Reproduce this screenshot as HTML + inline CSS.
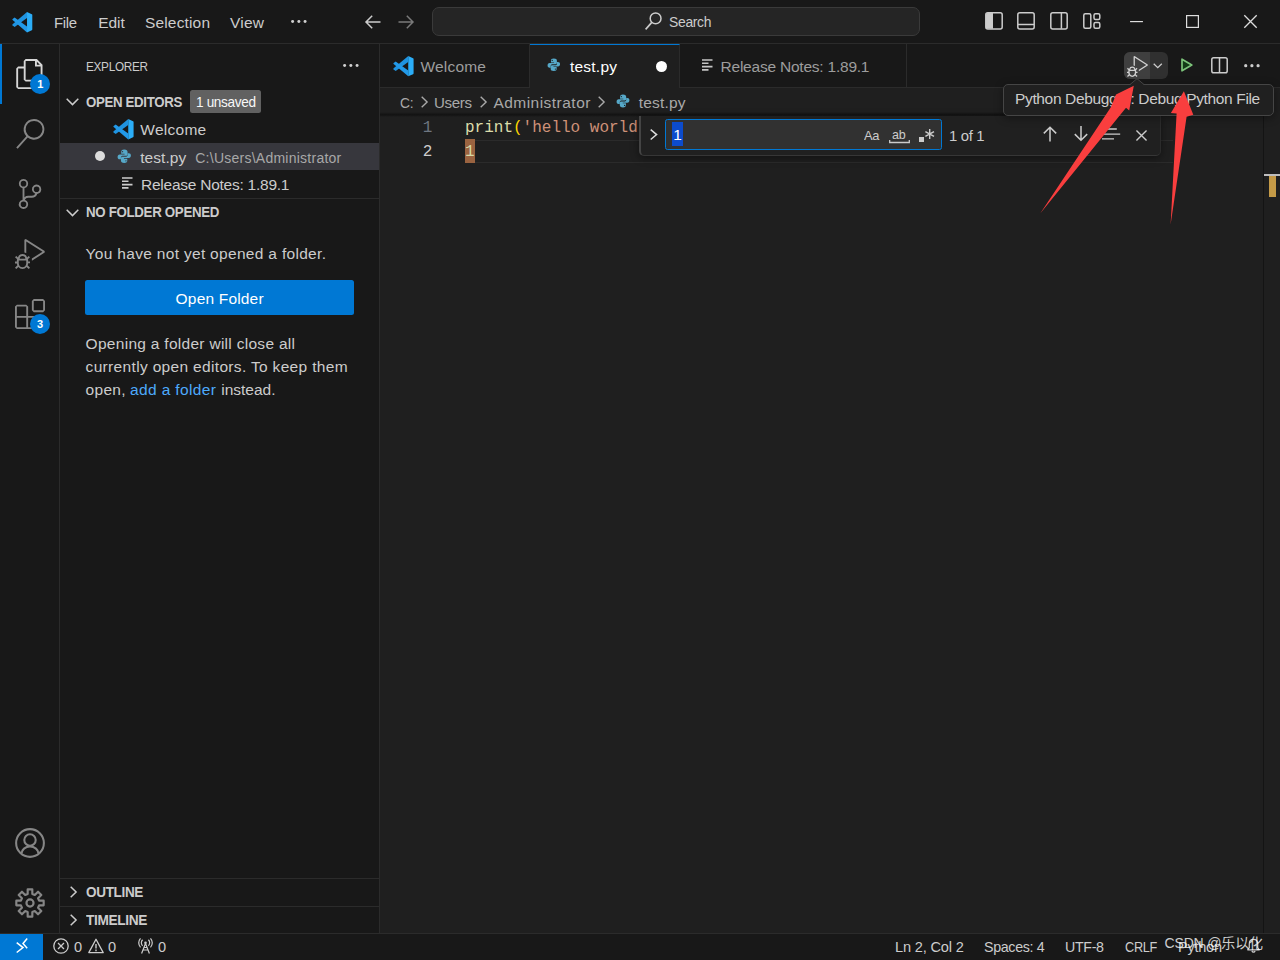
<!DOCTYPE html><html lang="en"><head><meta charset="utf-8"><title>test.py - Visual Studio Code</title><style>
*{box-sizing:border-box;margin:0;padding:0}
html,body{width:1280px;height:960px;overflow:hidden;background:#1f1f1f}
body{position:relative;font-family:"Liberation Sans","Noto Sans CJK SC",sans-serif;color:#ccc;-webkit-font-smoothing:antialiased}
div,span,svg{position:absolute}
.t{white-space:pre;line-height:1;transform-origin:0 50%}
.m{font-family:"Liberation Mono",monospace}
.i{overflow:visible}
#titlebar{left:0;top:0;width:1280px;height:44px;background:#181818;border-bottom:1px solid #2b2b2b}
#activity{left:0;top:44px;width:60px;height:889px;background:#181818;border-right:1px solid #2b2b2b}
#sidebar{left:60px;top:44px;width:320px;height:889px;background:#181818;border-right:1px solid #2b2b2b}
#editor{left:380px;top:44px;width:900px;height:889px;background:#1f1f1f}
#status{left:0;top:933px;width:1280px;height:27px;background:#181818;box-shadow:inset 0 1px 0 #2b2b2b}
#overlay{left:0;top:0;width:1280px;height:960px;pointer-events:none}
</style></head><body><div id="titlebar"><svg class="i" style="left:11.7px;top:11.8px" width="20.3" height="20.4" viewBox="0 0 100 100" preserveAspectRatio="none"><path d="M74 0L97.500 10.500Q100 11.700 100 15L100 85Q100 88.300 97.500 89.500L74 100Z" fill="#2badf7"/><path d="M74 0L74 29L13 73.500L3 66Q0 63.500 3 60.500Z" fill="#1f93e0"/><path d="M74 100L74 71L13 26.500L3 34Q0 36.500 3 39.500Z" fill="#2299e8"/></svg><span class="t" style="left:53.6px;top:15px;font-size:15.5px;color:#cccccc;letter-spacing:-0.350px;transform:scaleX(0.9610);">File</span><span class="t" style="left:98.2px;top:15px;font-size:15.5px;color:#cccccc;letter-spacing:-0.040px;">Edit</span><span class="t" style="left:145px;top:15px;font-size:15.5px;color:#cccccc;letter-spacing:0.154px;">Selection</span><span class="t" style="left:230px;top:15px;font-size:15.5px;color:#cccccc;letter-spacing:0.224px;">View</span><svg class="i" style="left:290.7px;top:19.5px" width="16" height="3.2" viewBox="0 0 16 3.200" fill="#d0d0d0"><circle cx="1.600" cy="1.600" r="1.500"/><circle cx="7.850" cy="1.600" r="1.500"/><circle cx="14.100" cy="1.600" r="1.500"/></svg><svg class="i" style="left:365px;top:14.5px" width="16" height="14" viewBox="0 0 16 14" ><path d="M15.500 7H1.200M7.200 0.800L1 7l6.200 6.200" stroke="#cccccc" stroke-width="1.500" fill="none"/></svg><svg class="i" style="left:398px;top:14.5px" width="16" height="14" viewBox="0 0 16 14" ><path d="M0.500 7H14.800M8.800 0.800L15 7l-6.200 6.200" stroke="#7a7a7a" stroke-width="1.500" fill="none"/></svg><div style="left:432px;top:7px;width:488px;height:29px;background:#252525;border:1px solid #3a3a3a;border-radius:7px"></div><svg class="i" style="left:645px;top:12px" width="17" height="18" viewBox="0 0 17 18" ><circle cx="10.600" cy="6.400" r="5.400" stroke="#cccccc" stroke-width="1.500" fill="none"/><path d="M6.800 10.400L0.600 17.400" stroke="#cccccc" stroke-width="1.600"/></svg><span class="t" style="left:668.75px;top:14px;font-size:15.5px;color:#cccccc;letter-spacing:-0.350px;transform:scaleX(0.8971);">Search</span><svg class="i" style="left:985px;top:12px" width="18" height="17.7" viewBox="0 0 18 17.700" ><rect x="0.800" y="0.800" width="16.400" height="16.100" rx="2" stroke="#cccccc" stroke-width="1.500" fill="none"/><path d="M1 2.500Q1 1 2.500 1H8V16.700H2.500Q1 16.700 1 15.200Z" fill="#cccccc"/></svg><svg class="i" style="left:1017.2px;top:12px" width="18" height="17.7" viewBox="0 0 18 17.700" ><rect x="0.800" y="0.800" width="16.400" height="16.100" rx="2" stroke="#cccccc" stroke-width="1.500" fill="none"/><path d="M1 12.500H17" stroke="#cccccc" stroke-width="1.500"/></svg><svg class="i" style="left:1050px;top:12px" width="18" height="17.7" viewBox="0 0 18 17.700" ><rect x="0.800" y="0.800" width="16.400" height="16.100" rx="2" stroke="#cccccc" stroke-width="1.500" fill="none"/><path d="M11.400 1V16.700" stroke="#cccccc" stroke-width="1.500"/></svg><svg class="i" style="left:1083px;top:13px" width="18" height="16" viewBox="0 0 18 16" ><rect x="0.800" y="0.800" width="7" height="14.400" rx="1.500" stroke="#cccccc" stroke-width="1.500" fill="none"/><rect x="11" y="0.800" width="5.800" height="5.600" rx="1.500" stroke="#cccccc" stroke-width="1.500" fill="none"/><rect x="11" y="9.600" width="5.800" height="5.600" rx="1.500" stroke="#cccccc" stroke-width="1.500" fill="none"/></svg><svg class="i" style="left:1130px;top:20.5px" width="13" height="1.2" viewBox="0 0 13 1.200" ><rect width="13" height="1.200" fill="#dddddd"/></svg><svg class="i" style="left:1186px;top:15px" width="13" height="13" viewBox="0 0 13 13" ><rect x="0.600" y="0.600" width="11.800" height="11.800" stroke="#dddddd" stroke-width="1.200" fill="none"/></svg><svg class="i" style="left:1244px;top:15px" width="13" height="13" viewBox="0 0 13 13" ><path d="M0.300 0.300L12.700 12.700M12.700 0.300L0.300 12.700" stroke="#dddddd" stroke-width="1.300" fill="none"/></svg></div><div id="activity"><div style="left:0px;top:0px;width:2px;height:60px;background:#0078d4"></div><svg class="i" style="left:15px;top:15px" width="30" height="30" viewBox="0 0 24 24" fill="#d7d7d7"><path d="M17.500 0h-9L7 1.500V6H2.500L1 7.500v15.070L2.500 24h12.070L16 22.570V18h4.700l1.300-1.430V4.500L17.500 0zm0 2.120l2.380 2.380H17.500V2.120zm-3 20.380h-12v-15H7v9.070L8.500 18h6v4.500zm6-6h-12v-15H16V6h4.500v10.500z"/></svg><svg class="i" style="left:15px;top:75px" width="30" height="30" viewBox="0 0 24 24" fill="#868686"><path d="M15.250 0a8.250 8.250 0 0 0-6.180 13.720L1 22.880l1.120 1 8.050-9.120A8.251 8.251 0 1 0 15.250.010V0zm0 15a6.750 6.750 0 1 1 0-13.500 6.750 6.750 0 0 1 0 13.500z"/></svg><svg class="i" style="left:15px;top:135px" width="30" height="30" viewBox="0 0 24 24" fill="#868686"><path d="M21.007 8.222A3.738 3.738 0 0 0 15.045 5.200a3.737 3.737 0 0 0 1.156 6.583 2.988 2.988 0 0 1-2.668 1.670h-2.990a4.456 4.456 0 0 0-2.989 1.165V7.400a3.737 3.737 0 1 0-1.494 0v9.117a3.776 3.776 0 1 0 1.816.099 2.990 2.990 0 0 1 2.668-1.667h2.990a4.484 4.484 0 0 0 4.223-3.039 3.736 3.736 0 0 0 3.250-3.687zM4.565 3.738a2.242 2.242 0 1 1 4.484 0 2.242 2.242 0 0 1-4.484 0zm4.484 16.441a2.242 2.242 0 1 1-4.484 0 2.242 2.242 0 0 1 4.484 0zm8.221-9.715a2.242 2.242 0 1 1 0-4.485 2.242 2.242 0 0 1 0 4.485z"/></svg><svg class="i" style="left:14.5px;top:195px" width="30" height="30" viewBox="0 0 24 24" fill="#868686"><path d="M10.940 13.500l-1.320 1.320a3.730 3.730 0 0 0-7.240 0L1.060 13.500 0 14.560l1.720 1.720-.220.220V18H0v1.500h1.500v.080c.077.489.214.966.410 1.420L0 22.940 1.060 24l1.650-1.650A4.308 4.308 0 0 0 6 24a4.310 4.310 0 0 0 3.290-1.650L10.940 24 12 22.940 10.090 21c.198-.464.336-.951.410-1.450v-.100H12V18h-1.500v-1.500l-.220-.220L12 14.560l-1.060-1.060zM6 13.500a2.250 2.250 0 0 1 2.250 2.250h-4.500A2.250 2.250 0 0 1 6 13.500zm3 6a3.330 3.330 0 0 1-3 3 3.330 3.330 0 0 1-3-3v-2.250h6v2.250zm14.760-9.900v1.260L13.500 17.370V15.600l8.500-5.370L9 2v9.460a5.070 5.070 0 0 0-1.500-.720V.630L8.640 0l15.120 9.600z"/></svg><svg class="i" style="left:15px;top:255px" width="30" height="30" viewBox="0 0 24 24" fill="#868686"><path d="M13.500 1.500L15 0h7.500L24 1.500V9l-1.500 1.500H15L13.500 9V1.500zm1.500 0V9h7.500V1.500H15zM0 15V6l1.500-1.500H9L10.500 6v7.500H18l1.500 1.500v7.500L18 24H1.500L0 22.500V15zm9-1.500V6H1.500v7.500H9zM9 15H1.500v7.500H9V15zm1.500 7.500H18V15h-7.500v7.500z"/></svg><div style="left:30px;top:30px;width:20px;height:20px;background:#0078d4;border-radius:10px"></div><span class="t" style="left:37.2px;top:35px;font-size:11px;color:#ffffff;font-weight:700;">1</span><div style="left:30px;top:270px;width:20px;height:20px;background:#0078d4;border-radius:10px"></div><span class="t" style="left:37px;top:275px;font-size:11px;color:#ffffff;font-weight:700;">3</span><svg class="i" style="left:15px;top:784px" width="30" height="30" viewBox="0 0 16 16" fill="none" stroke="#868686" stroke-width="1.100"><circle cx="8" cy="8" r="7.400"/><circle cx="8" cy="6.400" r="3.050"/><path d="M3.500 13.600A4.500 3.700 0 0 1 12.500 13.600"/></svg><svg class="i" style="left:15px;top:844px" width="30" height="30" viewBox="0 0 16 16" fill="none" stroke="#868686" stroke-width="1.150"><path d="M6.76 3.16L6.76 0.71L9.24 0.71L9.24 3.16L10.55 3.70L12.28 1.96L14.04 3.72L12.30 5.45L12.84 6.76L15.29 6.76L15.29 9.24L12.84 9.24L12.30 10.55L14.04 12.28L12.28 14.04L10.55 12.30L9.24 12.84L9.24 15.29L6.76 15.29L6.76 12.84L5.45 12.30L3.72 14.04L1.96 12.28L3.70 10.55L3.16 9.24L0.71 9.24L0.71 6.76L3.16 6.76L3.70 5.45L1.96 3.72L3.72 1.96L5.45 3.70Z" stroke-linejoin="round"/><circle cx="8" cy="8" r="1.900"/></svg></div><div id="sidebar"><span class="t" style="left:25.6px;top:16px;font-size:13.5px;color:#cccccc;letter-spacing:-0.350px;transform:scaleX(0.8722);">EXPLORER</span><svg class="i" style="left:282.5px;top:20.3px" width="16" height="3.2" viewBox="0 0 16 3.200" fill="#d0d0d0"><circle cx="1.600" cy="1.600" r="1.500"/><circle cx="7.850" cy="1.600" r="1.500"/><circle cx="14.100" cy="1.600" r="1.500"/></svg><svg class="i" style="left:6px;top:54.3px" width="13" height="7.5" viewBox="0 0 13 7.5" ><path d="M0.700 0.700 L6.5 6.6 L12.3 0.700" stroke="#cccccc" stroke-width="1.5" fill="none"/></svg><span class="t" style="left:25.6px;top:51px;font-size:14px;color:#cccccc;font-weight:700;letter-spacing:-0.350px;transform:scaleX(0.9469);">OPEN EDITORS</span><div style="left:130px;top:46px;width:71px;height:23px;background:#616161;border-radius:2.500px"></div><span class="t" style="left:135.75px;top:52px;font-size:13.75px;color:#f8f8f8;letter-spacing:-0.350px;transform:scaleX(0.9892);">1 unsaved</span><svg class="i" style="left:52.7px;top:75px" width="20.6" height="20.4" viewBox="0 0 100 100" preserveAspectRatio="none"><path d="M74 0L97.500 10.500Q100 11.700 100 15L100 85Q100 88.300 97.500 89.500L74 100Z" fill="#2badf7"/><path d="M74 0L74 29L13 73.500L3 66Q0 63.500 3 60.500Z" fill="#1f93e0"/><path d="M74 100L74 71L13 26.500L3 34Q0 36.500 3 39.500Z" fill="#2299e8"/></svg><span class="t" style="left:80.25px;top:78px;font-size:15.5px;color:#cccccc;letter-spacing:0.279px;">Welcome</span><div style="left:0px;top:99px;width:319px;height:27px;background:#37373d"></div><div style="left:34.7px;top:106.7px;width:10.6px;height:10.6px;background:#dcdcdc;border-radius:50%"></div><svg class="i" style="left:56.9px;top:104.7px" width="14.5" height="14.5" viewBox="0 0 24 24" fill="#56a8c8" fill-rule="evenodd"><path d="M12 1C8 1 7 2.6 7 5v3h5.5v1H4.6C2.2 9 1 10.8 1 13.2S2.2 17 4.6 17H6.5v-3c0-1.9 1.5-3 3.3-3H15c1.500 0 2.500-1 2.500-2.500V5C17.500 2.600 16 1 12 1zM9.200 3.300a1.100 1.100 0 1 1 0 2.200 1.100 1.100 0 0 1 0-2.200z"/><path transform="rotate(180 12 12)" d="M12 1C8 1 7 2.600 7 5v3h5.500v1H4.600C2.200 9 1 10.800 1 13.200S2.200 17 4.600 17H6.500v-3c0-1.900 1.500-3 3.300-3H15c1.500 0 2.500-1 2.500-2.500V5C17.500 2.600 16 1 12 1zM9.200 3.300a1.100 1.100 0 1 1 0 2.200 1.100 1.100 0 0 1 0-2.200z"/></svg><span class="t" style="left:80.25px;top:106px;font-size:15.5px;color:#cccccc;letter-spacing:0.055px;">test.py</span><span class="t" style="left:135.25px;top:107px;font-size:14px;color:#a8a8a8;letter-spacing:0.247px;">C:\Users\Administrator</span><svg class="i" style="left:62px;top:133.2px" width="11" height="12" viewBox="0 0 11 12" ><path d="M0 1h10.500M0 4.300h6.500M0 7.600h10.500M0 10.900h6.500" stroke="#cccccc" stroke-width="1.600" fill="none"/></svg><span class="t" style="left:81px;top:133px;font-size:15.5px;color:#cccccc;letter-spacing:-0.244px;">Release Notes: 1.89.1</span><div style="left:0px;top:154px;width:319px;height:1px;background:#2b2b2b"></div><svg class="i" style="left:6px;top:165px" width="13" height="7.5" viewBox="0 0 13 7.5" ><path d="M0.700 0.700 L6.5 6.6 L12.3 0.700" stroke="#cccccc" stroke-width="1.5" fill="none"/></svg><span class="t" style="left:25.6px;top:161px;font-size:14px;color:#cccccc;font-weight:700;letter-spacing:-0.350px;transform:scaleX(0.9514);">NO FOLDER OPENED</span><span class="t" style="left:25.6px;top:202px;font-size:15.5px;color:#cccccc;letter-spacing:0.312px;">You have not yet opened a folder.</span><div style="left:25px;top:236px;width:269px;height:35px;background:#0078d4;border-radius:2.500px"></div><span class="t" style="left:115.6px;top:247px;font-size:15.5px;color:#ffffff;letter-spacing:0.183px;">Open Folder</span><span class="t" style="left:25.6px;top:292px;font-size:15.5px;color:#cccccc;letter-spacing:0.288px;">Opening a folder will close all</span><span class="t" style="left:25.6px;top:315px;font-size:15.5px;color:#cccccc;letter-spacing:0.330px;">currently open editors. To keep them</span><span class="t" style="left:25.6px;top:338px;font-size:15.5px;color:#cccccc;letter-spacing:0.301px;">open,</span><span class="t" style="left:70px;top:338px;font-size:15.5px;color:#4daafc;letter-spacing:0.375px;">add a folder</span><span class="t" style="left:161.25px;top:338px;font-size:15.5px;color:#cccccc;letter-spacing:-0.007px;">instead.</span><div style="left:0px;top:834px;width:319px;height:1px;background:#2b2b2b"></div><svg class="i" style="left:9.5px;top:842px" width="7" height="12" viewBox="0 0 7 12" ><path d="M0.700 0.700 L6.1 6.0 L0.700 11.3" stroke="#cccccc" stroke-width="1.5" fill="none"/></svg><span class="t" style="left:25.6px;top:841px;font-size:14px;color:#cccccc;font-weight:700;letter-spacing:-0.350px;transform:scaleX(0.9671);">OUTLINE</span><div style="left:0px;top:861.5px;width:319px;height:1px;background:#2b2b2b"></div><svg class="i" style="left:9.5px;top:870px" width="7" height="12" viewBox="0 0 7 12" ><path d="M0.700 0.700 L6.1 6.0 L0.700 11.3" stroke="#cccccc" stroke-width="1.5" fill="none"/></svg><span class="t" style="left:25.6px;top:869px;font-size:14px;color:#cccccc;font-weight:700;letter-spacing:-0.350px;transform:scaleX(0.9762);">TIMELINE</span></div><div id="editor"><div style="left:0px;top:0px;width:900px;height:44px;background:#181818;border-bottom:1px solid #2b2b2b"></div><div style="left:0px;top:0px;width:150px;height:43px;border-right:1px solid #2b2b2b"></div><svg class="i" style="left:12.8px;top:11.8px" width="20.6" height="20.3" viewBox="0 0 100 100" preserveAspectRatio="none"><path d="M74 0L97.500 10.500Q100 11.700 100 15L100 85Q100 88.300 97.500 89.500L74 100Z" fill="#2badf7"/><path d="M74 0L74 29L13 73.500L3 66Q0 63.500 3 60.500Z" fill="#1f93e0"/><path d="M74 100L74 71L13 26.500L3 34Q0 36.500 3 39.500Z" fill="#2299e8"/></svg><span class="t" style="left:40.5px;top:15px;font-size:15.5px;color:#9d9d9d;letter-spacing:0.195px;">Welcome</span><div style="left:150px;top:0px;width:150px;height:44px;background:#1f1f1f;border-top:1px solid #0078d4;border-right:1px solid #2b2b2b"></div><svg class="i" style="left:167.3px;top:14.2px" width="13.6" height="13.6" viewBox="0 0 24 24" fill="#56a8c8" fill-rule="evenodd"><path d="M12 1C8 1 7 2.6 7 5v3h5.5v1H4.6C2.2 9 1 10.8 1 13.2S2.2 17 4.6 17H6.5v-3c0-1.9 1.5-3 3.3-3H15c1.500 0 2.500-1 2.500-2.500V5C17.500 2.600 16 1 12 1zM9.200 3.300a1.100 1.100 0 1 1 0 2.200 1.100 1.100 0 0 1 0-2.200z"/><path transform="rotate(180 12 12)" d="M12 1C8 1 7 2.600 7 5v3h5.500v1H4.600C2.200 9 1 10.800 1 13.200S2.200 17 4.600 17H6.500v-3c0-1.900 1.500-3 3.300-3H15c1.500 0 2.500-1 2.500-2.500V5C17.500 2.600 16 1 12 1zM9.200 3.300a1.100 1.100 0 1 1 0 2.200 1.100 1.100 0 0 1 0-2.200z"/></svg><span class="t" style="left:190px;top:15px;font-size:15.5px;color:#ffffff;letter-spacing:0.221px;">test.py</span><div style="left:276px;top:16.5px;width:11px;height:11px;background:#ffffff;border-radius:50%"></div><div style="left:300px;top:0px;width:227px;height:43px;border-right:1px solid #2b2b2b"></div><svg class="i" style="left:322px;top:14.8px" width="11" height="12" viewBox="0 0 11 12" ><path d="M0 1h10.500M0 4.300h6.500M0 7.600h10.500M0 10.900h6.500" stroke="#c5c5c5" stroke-width="1.600" fill="none"/></svg><span class="t" style="left:340.5px;top:15px;font-size:15.5px;color:#9d9d9d;letter-spacing:-0.219px;">Release Notes: 1.89.1</span><div style="left:744px;top:8px;width:44px;height:27px;background:#303030;border-radius:6px"></div><div style="left:744px;top:8px;width:26px;height:27px;background:#3f3f3f;border-radius:6px 0 0 6px"></div><svg class="i" style="left:747px;top:12px" width="21" height="21" viewBox="0 0 24 24" fill="#d0d0d0"><path d="M10.940 13.500l-1.320 1.320a3.730 3.730 0 0 0-7.240 0L1.060 13.500 0 14.560l1.720 1.720-.220.220V18H0v1.500h1.500v.080c.077.489.214.966.410 1.420L0 22.940 1.060 24l1.650-1.650A4.308 4.308 0 0 0 6 24a4.310 4.310 0 0 0 3.290-1.650L10.940 24 12 22.940 10.090 21c.198-.464.336-.951.410-1.450v-.100H12V18h-1.500v-1.500l-.220-.220L12 14.560l-1.060-1.060zM6 13.500a2.250 2.250 0 0 1 2.250 2.250h-4.500A2.250 2.250 0 0 1 6 13.500zm3 6a3.330 3.330 0 0 1-3 3 3.330 3.330 0 0 1-3-3v-2.250h6v2.250zm14.760-9.900v1.260L13.500 17.370V15.600l8.500-5.370L9 2v9.460a5.070 5.070 0 0 0-1.500-.720V.630L8.640 0l15.120 9.600z"/></svg><svg class="i" style="left:773px;top:19px" width="9.5" height="5.5" viewBox="0 0 9.5 5.5" ><path d="M0.700 0.700 L4.75 4.6 L8.8 0.700" stroke="#cccccc" stroke-width="1.3" fill="none"/></svg><svg class="i" style="left:800.5px;top:14px" width="12" height="14" viewBox="0 0 12 14" ><path d="M1 1.200L10.800 7L1 12.800Z" stroke="#7cc47a" stroke-width="1.700" fill="#133c17" stroke-linejoin="round"/></svg><svg class="i" style="left:831px;top:13px" width="17" height="16.5" viewBox="0 0 17 16.500" ><rect x="0.800" y="0.800" width="15.400" height="14.900" rx="1.800" stroke="#cccccc" stroke-width="1.500" fill="none"/><path d="M8.500 1V15.500" stroke="#cccccc" stroke-width="1.500"/></svg><svg class="i" style="left:863.8px;top:20.3px" width="17" height="3.4" viewBox="0 0 17 3.400" fill="#cccccc"><circle cx="1.700" cy="1.700" r="1.600"/><circle cx="7.900" cy="1.700" r="1.600"/><circle cx="14.100" cy="1.700" r="1.600"/></svg><span class="t" style="left:20.25px;top:51px;font-size:15.5px;color:#a9a9a9;letter-spacing:-0.350px;transform:scaleX(0.8911);">C:</span><svg class="i" style="left:40.5px;top:52px" width="7" height="12" viewBox="0 0 7 12" ><path d="M0.700 0.700 L6.1 6.0 L0.700 11.3" stroke="#a9a9a9" stroke-width="1.4" fill="none"/></svg><span class="t" style="left:54.25px;top:51px;font-size:15.5px;color:#a9a9a9;letter-spacing:-0.350px;transform:scaleX(0.9723);">Users</span><svg class="i" style="left:100px;top:52px" width="7" height="12" viewBox="0 0 7 12" ><path d="M0.700 0.700 L6.1 6.0 L0.700 11.3" stroke="#a9a9a9" stroke-width="1.4" fill="none"/></svg><span class="t" style="left:113.4px;top:51px;font-size:15.5px;color:#a9a9a9;letter-spacing:0.474px;">Administrator</span><svg class="i" style="left:217.5px;top:52px" width="7" height="12" viewBox="0 0 7 12" ><path d="M0.700 0.700 L6.1 6.0 L0.700 11.3" stroke="#a9a9a9" stroke-width="1.4" fill="none"/></svg><svg class="i" style="left:235.6px;top:50px" width="14" height="14" viewBox="0 0 24 24" fill="#56a8c8" fill-rule="evenodd"><path d="M12 1C8 1 7 2.6 7 5v3h5.5v1H4.6C2.2 9 1 10.8 1 13.2S2.2 17 4.6 17H6.5v-3c0-1.9 1.5-3 3.3-3H15c1.500 0 2.500-1 2.500-2.500V5C17.500 2.600 16 1 12 1zM9.200 3.300a1.100 1.100 0 1 1 0 2.200 1.100 1.100 0 0 1 0-2.200z"/><path transform="rotate(180 12 12)" d="M12 1C8 1 7 2.600 7 5v3h5.500v1H4.600C2.200 9 1 10.800 1 13.200S2.200 17 4.600 17H6.500v-3c0-1.900 1.500-3 3.300-3H15c1.500 0 2.500-1 2.500-2.500V5C17.500 2.600 16 1 12 1zM9.200 3.300a1.100 1.100 0 1 1 0 2.200 1.100 1.100 0 0 1 0-2.200z"/></svg><span class="t" style="left:258.75px;top:51px;font-size:15.5px;color:#a9a9a9;letter-spacing:0.180px;">test.py</span><div style="left:0px;top:68px;width:883px;height:5px;background:linear-gradient(to bottom,rgba(0,0,0,0),rgba(0,0,0,.42) 55%,rgba(0,0,0,0))"></div><div style="left:85px;top:95.5px;width:708px;height:23px;border-top:1px solid #2b2b2b;border-bottom:1px solid #2b2b2b"></div><div style="left:85px;top:95px;width:10px;height:24px;background:#9a6340"></div><span class="t m" style="left:42.7px;top:76px;font-size:16px;color:#6e7681;">1</span><span class="t m" style="left:42.7px;top:100px;font-size:16px;color:#cccccc;">2</span><span class="t m" style="left:85px;top:76px;font-size:16px;color:#dcdcaa;">print</span><span class="t m" style="left:133px;top:76px;font-size:16px;color:#ffd700;">(</span><span class="t m" style="left:142.6px;top:76px;font-size:16px;color:#ce9178;">&#x27;hello world&#x27;</span><span class="t m" style="left:267.4px;top:76px;font-size:16px;color:#ffd700;">)</span><span class="t m" style="left:85px;top:100px;font-size:16px;color:#d5d9a8;">1</span><div style="left:883px;top:72px;width:1px;height:817px;background:#141414"></div><div style="left:884px;top:130px;width:16px;height:2px;background:#bdbdbd"></div><div style="left:889px;top:132px;width:7px;height:21px;background:#c49a47"></div><div style="left:259px;top:71.5px;width:521.5px;height:40px;background:#202020;border-left:2px solid #444444;border-bottom:1px solid #363636;border-right:1px solid #2b2b2b;border-radius:0 0 5px 5px;box-shadow:0 2px 8px rgba(0,0,0,.45)"></div><svg class="i" style="left:270px;top:85.4px" width="7.5" height="11.2" viewBox="0 0 7.5 11.2" ><path d="M0.700 0.700 L6.6 5.6 L0.700 10.5" stroke="#dddddd" stroke-width="1.5" fill="none"/></svg><div style="left:285px;top:75px;width:277px;height:31px;background:#313131;border:1px solid #0078d4;border-radius:2.500px"></div><div style="left:292.2px;top:78.2px;width:10.6px;height:23.8px;background:#0c4bcc"></div><span class="t" style="left:293.2px;top:83px;font-size:15.5px;color:#ffffff;">1</span><span class="t" style="left:484px;top:85px;font-size:13px;color:#cccccc;letter-spacing:-0.350px;transform:scaleX(0.9900);">Aa</span><span class="t" style="left:512px;top:84px;font-size:13px;color:#cccccc;letter-spacing:-0.350px;transform:scaleX(0.9633);">ab</span><svg class="i" style="left:508.5px;top:95.5px" width="21" height="3.2" viewBox="0 0 21 3.200" ><path d="M0.650 0V2.500H20.350V0" stroke="#cccccc" stroke-width="1.300" fill="none"/></svg><div style="left:538.8px;top:93.2px;width:5.4px;height:5.2px;background:#cccccc"></div><svg class="i" style="left:544.8px;top:84.6px" width="9.4" height="10.4" viewBox="0 0 10 11" ><path d="M5 0V10.500M0.400 2.700L9.600 7.900M9.600 2.700L0.400 7.900" stroke="#cccccc" stroke-width="1.500"/></svg><span class="t" style="left:568.75px;top:84px;font-size:15.5px;color:#cccccc;letter-spacing:-0.350px;transform:scaleX(0.9614);">1 of 1</span><svg class="i" style="left:663px;top:82.2px" width="14" height="15.5" viewBox="0 0 14 15.500" ><path d="M7 15.500V1.200M0.800 7.400L7 1.200l6.200 6.200" stroke="#cccccc" stroke-width="1.500" fill="none"/></svg><svg class="i" style="left:693.5px;top:82.2px" width="14" height="15.5" viewBox="0 0 14 15.500" ><path d="M7 0V14.300M0.800 8.100L7 14.300l6.200-6.200" stroke="#cccccc" stroke-width="1.500" fill="none"/></svg><svg class="i" style="left:722.2px;top:84.3px" width="18.2" height="12" viewBox="0 0 18.200 12" ><path d="M4.400 1H14.800M0 6.100H18.200M0 10.900H12" stroke="#cccccc" stroke-width="1.300"/></svg><svg class="i" style="left:756.2px;top:85.5px" width="11" height="11" viewBox="0 0 12 12" ><path d="M0.500 0.500L11.500 11.500M11.500 0.500L0.500 11.500" stroke="#cccccc" stroke-width="1.500"/></svg></div><div id="status"><div style="left:0px;top:1px;width:43px;height:26px;background:#0078d4"></div><svg class="i" style="left:15.5px;top:5px" width="12" height="15" viewBox="0 0 12 15" ><path d="M0.700 4.700L7 9.600L0.700 14.500M11.200 0.400L7 5.400L11.200 10.300" stroke="#ffffff" stroke-width="1.500" fill="none"/></svg><svg class="i" style="left:53px;top:5px" width="16" height="16" viewBox="0 0 16 16" ><circle cx="8" cy="8" r="7.200" stroke="#cccccc" stroke-width="1.300" fill="none"/><path d="M5 5L11 11M11 5L5 11" stroke="#cccccc" stroke-width="1.300"/></svg><span class="t" style="left:74px;top:7px;font-size:14.6px;color:#cccccc;">0</span><svg class="i" style="left:87.5px;top:5px" width="16" height="15.5" viewBox="0 0 16 15.500" ><path d="M8 1.300L15.200 14.600H0.800Z" stroke="#cccccc" stroke-width="1.300" fill="none" stroke-linejoin="round"/><path d="M8 6V10.500M8 11.600V13.200" stroke="#cccccc" stroke-width="1.400"/></svg><span class="t" style="left:108px;top:7px;font-size:14.6px;color:#cccccc;">0</span><svg class="i" style="left:138px;top:5px" width="15" height="16" viewBox="0 0 15 16" ><path d="M7.500 5.500L3.600 15.500M7.500 5.500L11.400 15.500M5 12H10M5.800 9.500H9.200" stroke="#cccccc" stroke-width="1.200" fill="none"/><circle cx="7.500" cy="4.800" r="1.300" fill="#cccccc"/><path d="M4.600 1.800A4.200 4.200 0 0 0 4.600 7.800M10.400 1.800A4.200 4.200 0 0 1 10.400 7.800M2.500 0.300A6.600 6.600 0 0 0 2.500 9.300M12.500 0.300A6.600 6.600 0 0 1 12.500 9.300" stroke="#cccccc" stroke-width="1.200" fill="none"/></svg><span class="t" style="left:158px;top:7px;font-size:14.6px;color:#cccccc;">0</span><span class="t" style="left:895px;top:7px;font-size:14.6px;color:#cccccc;letter-spacing:-0.184px;">Ln 2, Col 2</span><span class="t" style="left:984px;top:7px;font-size:14.6px;color:#cccccc;letter-spacing:-0.350px;transform:scaleX(0.9774);">Spaces: 4</span><span class="t" style="left:1065px;top:7px;font-size:14.6px;color:#cccccc;letter-spacing:-0.350px;transform:scaleX(0.9760);">UTF-8</span><span class="t" style="left:1124.7px;top:7px;font-size:14.6px;color:#cccccc;letter-spacing:-0.350px;transform:scaleX(0.8716);">CRLF</span><span class="t" style="left:1178px;top:7px;font-size:14.6px;color:#cccccc;letter-spacing:-0.287px;">Python</span><svg class="i" style="left:1245.5px;top:5.3px" width="15" height="15.6" viewBox="0 0 16 16" ><path d="M8 1.200C5 1.200 3.500 3.400 3.500 6V10L1.800 12.300H14.200L12.500 10V6C12.500 3.400 11 1.200 8 1.200Z" stroke="#cccccc" stroke-width="1.300" fill="none" stroke-linejoin="round"/><path d="M6.300 13.500A1.800 1.800 0 0 0 9.700 13.500" stroke="#cccccc" stroke-width="1.300" fill="none"/></svg></div><div id="overlay"><div style="left:1003px;top:83.5px;width:270.5px;height:32.5px;background:#202020;border:1px solid #454545;border-radius:5px;box-shadow:0 2px 8px rgba(0,0,0,.4)"></div><svg class="i" style="left:1130px;top:78px" width="14" height="7" viewBox="0 0 14 7" ><path d="M0 7L7 0.500L14 7Z" fill="#202020"/><path d="M0 6.500L7 0.700L14 6.500" stroke="#454545" stroke-width="1" fill="none"/></svg><span class="t" style="left:1015px;top:91px;font-size:15.5px;color:#cccccc;letter-spacing:-0.350px;">Python Debugger: Debug Python File</span><svg class="i" style="left:0;top:0" width="1280" height="960" viewBox="0 0 1280 960"><path d="M1133.800 85.800L1116 94.500L1111 107L1040.200 213.400L1126 107.800L1129.200 110.600Z" fill="#f93e3e"/><path d="M1183.900 91.200L1170.900 113.100L1176.600 113.600L1170.600 224.500L1186.600 116.700L1193.300 114.700Z" fill="#f93e3e"/></svg><span class="t" style="left:1164.5px;top:936px;font-size:14px;color:rgba(255,255,255,.8);letter-spacing:-0.160px;">CSDN @乐以化</span></div></body></html>
